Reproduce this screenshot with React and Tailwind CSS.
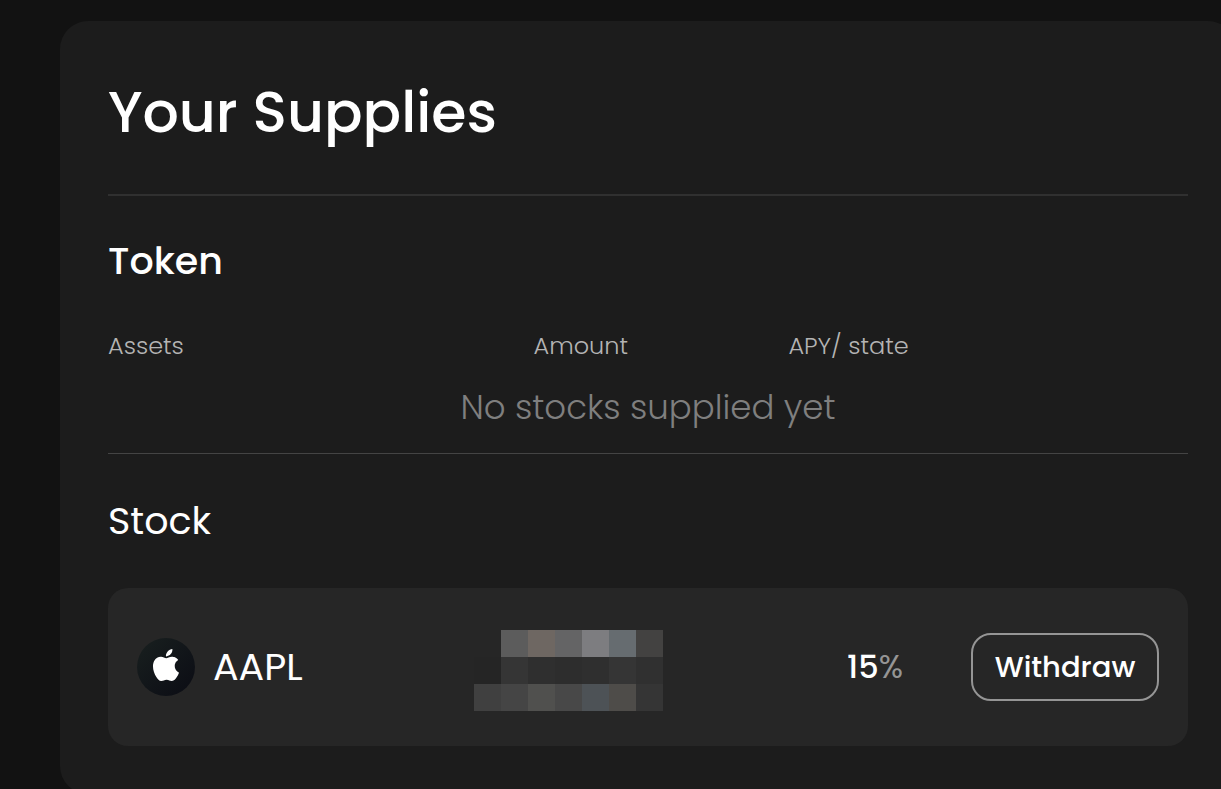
import { SiApple } from "react-icons/si";

const MOSAIC = [
  ["#262626", "#5c5c5c", "#6e6762", "#646465", "#7d7d80", "#666c70", "#434241"],
  ["#252525", "#353535", "#2f2f2f", "#2d2d2d", "#2f2f2f", "#353535", "#303030"],
  ["#404040", "#454545", "#50504e", "#484848", "#4d5256", "#4e4c49", "#353535"],
];

function HiddenAmount() {
  return (
    <div role="img" aria-label="Amount hidden" className="grid w-[189px] grid-cols-7 pt-[7px]">
      {MOSAIC.flat().map((color, i) => (
        <span key={i} className="h-[27px]" style={{ backgroundColor: color }} />
      ))}
    </div>
  );
}

function TokenTable() {
  return (
    <table className="mt-[38px] w-full table-fixed text-left">
      <colgroup>
        <col className="w-[39.4%]" />
        <col className="w-[23.6%]" />
        <col />
      </colgroup>
      <thead className="text-2xl text-[#b4b4b4]">
        <tr>
          <th scope="col" className="p-0 font-light">Assets</th>
          <th scope="col" className="p-0 font-light">Amount</th>
          <th scope="col" className="p-0 font-light">APY/ state</th>
        </tr>
      </thead>
      <tbody>
        <tr>
          <td colSpan={3} className="px-0 pt-5 pb-5 text-center text-[34px] leading-[51px] font-light text-[#7f7f7f]">
            No stocks supplied yet
          </td>
        </tr>
      </tbody>
    </table>
  );
}

function StockRow() {
  return (
    <li className="flex items-center rounded-[20px] bg-[#262626] px-[29px] py-[35px]">
      <div className="flex flex-1 items-center gap-[18px]">
        <span className="flex size-[58px] items-center justify-center rounded-full bg-linear-to-br from-[#19201f] to-[#0b0c14] pb-1 text-white">
          <SiApple className="size-8" aria-hidden="true" />
        </span>
        <span className="text-[38px] leading-[58px]">AAPL</span>
      </div>
      <HiddenAmount />
      <div className="w-[308px] pr-[68px] text-right text-[32px] leading-[48px] font-medium">
        15<span className="font-normal text-[#959595]">%</span>
      </div>
      <button type="button" className="h-[68px] w-[188px] rounded-[20px] border-2 border-[#959595] pt-0.5 text-[29px] font-medium">
        Withdraw
      </button>
    </li>
  );
}

export default function App() {
  return (
    <main className="h-screen overflow-hidden bg-[#121212] pt-[21px] pl-[60px] font-['Poppins','Inter',sans-serif] text-white">
      <section className="-mr-[15px] rounded-[28px] bg-[#1c1c1c] px-12 pt-12 pb-12">
        <h1 className="pb-[39px] text-[57px] leading-[86px] font-medium">Your Supplies</h1>
        <div className="border-t-2 border-[#303030] pt-[34px]">
          <h2 className="text-[38px] leading-[62px] font-medium">Token</h2>
          <TokenTable />
        </div>
        <div className="border-t border-[#444444] pt-9">
          <h2 className="text-[38px] leading-[62px]">Stock</h2>
          <ul className="mt-9">
            <StockRow />
          </ul>
        </div>
      </section>
    </main>
  );
}
